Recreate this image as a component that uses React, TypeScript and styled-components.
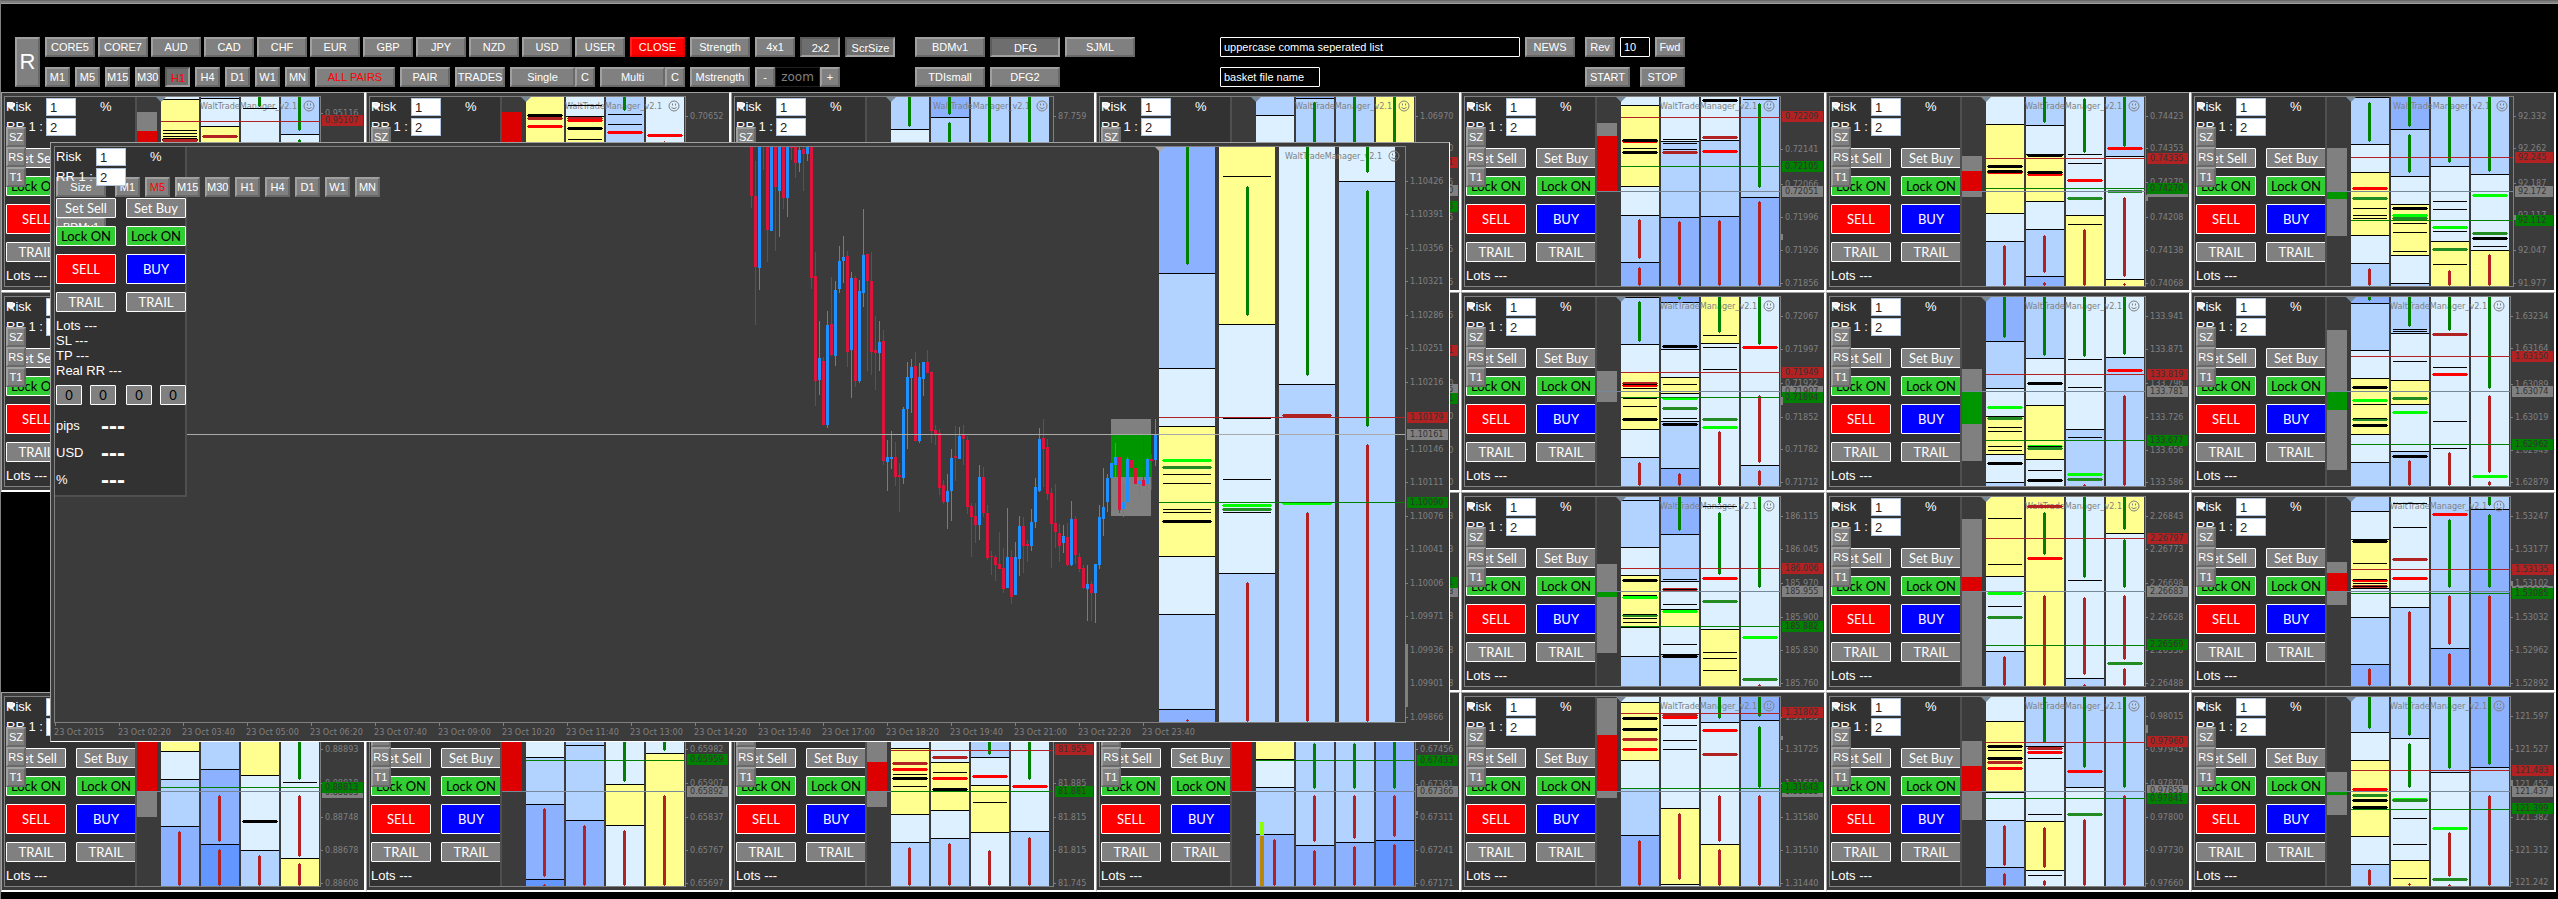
import React from 'react';
import styled, { createGlobalStyle, css } from 'styled-components';

const GlobalStyle = createGlobalStyle`
  html, body { margin: 0; background: #000; }
  body { font-family: 'Liberation Sans', Arial, sans-serif; color: #fff; overflow-x: hidden; }
  *, *::before, *::after { box-sizing: border-box; }
  button, input { font-family: inherit; margin: 0; }
  button { cursor: pointer; }
`;

const AXIS_FONT = "'DejaVu Sans Condensed', 'DejaVu Sans', sans-serif";

/* ---------- colours ---------- */

const BAND: Record<string, string> = {
  L: '#dcf0ff',
  M: '#b2d2ff',
  D: '#8cb2ff',
  E: '#6496ff',
  Y: '#ffff90',
};
const MARK: Record<string, string> = {
  '-': '#000',
  '=': '#000',
  r: '#ff0000',
  d: '#b22222',
  g: '#00ff00',
  f: '#228b22',
};
const TAG: Record<string, string> = { red: '#b22222', green: '#008000', gray: '#808080' };

/* ---------- shell ---------- */

const Desk = styled.main`
  position: relative;
  min-height: 100vh;
  background: #000;
  border-left: 1px solid #808080;
  border-top: 1px solid #696969;
  overflow: hidden;
`;

const TopEdge = styled.div`
  height: 3px;
  background: #808080;
  border-bottom: 1px solid #a0a0a0;
`;

const Toolbar = styled.header`
  display: flex;
  align-items: flex-start;
  padding: 33px 0 5px 14px;
  height: 88px;
`;

const Section = styled.div<{ $before?: number }>`
  display: flex;
  flex-direction: column;
  gap: 10px;
  margin-left: ${(p) => p.$before ?? 5}px;
  flex: none;
`;

const Row = styled.div<{ $gap?: number }>`
  display: flex;
  gap: ${(p) => p.$gap ?? 5}px;
  height: 20px;
`;

const Joined = styled.div`
  display: flex;
`;

const Bevel = styled.button<{ $w: number; $h?: number; $down?: boolean; $color?: string; $bg?: string; $size?: number }>`
  flex: none;
  width: ${(p) => p.$w}px;
  height: ${(p) => p.$h ?? 20}px;
  padding: 0;
  font-size: ${(p) => p.$size ?? 11}px;
  line-height: 16px;
  white-space: nowrap;
  color: ${(p) => p.$color ?? '#fff'};
  background: ${(p) => p.$bg ?? '#808080'};
  border: 2px solid;
  border-color: #a0a0a0 #696969 #696969 #a0a0a0;
  ${(p) =>
    p.$down &&
    css`
      background: #6e6e6e;
      border-color: #5c5c5c #a0a0a0 #a0a0a0 #5c5c5c;
      padding: 1px 0 0 1px;
    `}
  ${(p) =>
    p.$bg &&
    css`
      border-color: #ff2020 #e00000 #e00000 #ff2020;
    `}
`;

const ZoomLabel = styled.span`
  width: 45px;
  text-align: center;
  font: 12px/18px 'DejaVu Sans', sans-serif;
  color: #808080;
  border: 1px solid #202020;
`;

const BarField = styled.input<{ $w: number }>`
  width: ${(p) => p.$w}px;
  height: 20px;
  flex: none;
  padding: 0 3px;
  background: #000;
  color: #fff;
  border: 1px solid #fff;
  border-radius: 1px;
  font-size: 11px;
`;

/* ---------- chart panels ---------- */

const Wall = styled.section`
  display: grid;
  grid-template-columns: repeat(7, 1fr);
  grid-auto-rows: 200px;
  padding-right: 2px;
`;

const Panel = styled.article`
  display: flex;
  min-width: 0;
  overflow: hidden;
  padding: 3px 0 3px 2px;
  background: #3b3b3b;
  border: solid #a0a0a0;
  border-width: 1px 2px 2px 1px;
  border-right-color: #fff;
  border-bottom-color: #fff;
`;

const Plot = styled.div`
  position: relative;
  display: flex;
  flex: 1;
  min-width: 0;
  align-items: flex-start;
  border: 1px solid #808080;
  overflow: hidden;
`;

const Spacer = styled.div`
  flex: 1;
  height: 1px;
`;

const Drawing = styled.svg`
  display: block;
  flex: none;
`;

const Ticket = styled.form<{ $framed?: boolean }>`
  flex: none;
  width: 132px;
  height: ${(p) => (p.$framed ? '350px' : '189px')};
  padding: 1px 0 0 1px;
  background: #323232;
  border-right: 2px solid #4f4f4f;
  border-bottom: ${(p) => (p.$framed ? '2px solid #4f4f4f' : '0')};
  overflow: ${(p) => (p.$framed ? 'visible' : 'hidden')};
`;

const Line = styled.div<{ $after: number }>`
  position: relative;
  z-index: 2;
  display: flex;
  align-items: center;
  height: 18px;
  margin-bottom: ${(p) => p.$after}px;
  font-size: 13px;
  line-height: 18px;
`;

const Caption = styled.label`
  width: 40px;
  flex: none;
  white-space: pre;
`;

const TicketField = styled.input`
  width: 30px;
  height: 18px;
  padding: 0 0 0 3px;
  background: #fff;
  color: #222;
  border: 1px solid #b0c4de;
  font-size: 13px;
`;

const Percent = styled.span`
  margin-left: 24px;
`;

const Pair = styled.div<{ $after: number }>`
  position: relative;
  z-index: 2;
  display: flex;
  gap: 10px;
  width: 130px;
  margin-bottom: ${(p) => p.$after}px;
`;

const Action = styled.button<{ $bg?: string; $ink?: string; $tall?: boolean }>`
  width: 60px;
  height: ${(p) => (p.$tall ? 30 : 20)}px;
  flex: none;
  padding: 0;
  font: 13px/16px Lato, 'Open Sans', sans-serif;
  white-space: nowrap;
  color: ${(p) => p.$ink ?? '#fff'};
  background: ${(p) => p.$bg ?? '#808080'};
  border: 1px solid #fff;
  border-radius: 1px;
`;

const Split = styled.div`
  display: flex;
  justify-content: space-between;
  width: 60px;
`;

const Count = styled(Action)`
  width: 26px;
  color: #000;
`;

const Facts = styled.div`
  font-size: 13px;
  line-height: 15px;
  white-space: pre;
  margin: -2px 0 7px;
`;

const Totals = styled.dl`
  display: grid;
  grid-template-columns: 45px auto;
  grid-auto-rows: 27px;
  margin: 13px 0 0;
  font-size: 13px;
  line-height: 15px;
  dt, dd { margin: 0; }
  dd { font-size: 24px; font-weight: 700; }
`;

const Side = styled.div`
  position: absolute;
  z-index: 3;
  left: 1px;
  top: 30px;
  display: flex;
  flex-direction: column;
`;

const Pin = styled.svg`
  position: absolute;
  z-index: 4;
  left: 2px;
  top: 6px;
`;

/* ---------- floating window ---------- */

const Floating = styled.article`
  position: absolute;
  z-index: 5;
  left: 49px;
  top: 141px;
  width: 1400px;
  height: 600px;
  display: grid;
  grid-template-columns: 1fr 43px;
  grid-template-rows: 577px 1fr;
  padding: 3px 0 0 3px;
  background: #3b3b3b;
  border: 1px solid #a0a0a0;
  border-right-color: #fff;
  border-bottom-color: #fff;
`;

const Behind = styled.div`
  position: absolute;
  z-index: 1;
  left: 1px;
  top: 30px;
  display: flex;
  gap: 5px;
`;

const BehindLow = styled(Behind)`
  top: 70px;
`;

const SizeSlot = styled.div`
  width: 54px;
`;

const Times = styled.div`
  display: flex;
  overflow: hidden;
  grid-column: 1 / -1;
`;

const Time = styled.span`
  width: 64px;
  flex: none;
  white-space: nowrap;
  font: 9px/12px ${AXIS_FONT};
  color: #808080;
  &::before {
    content: '';
    display: block;
    width: 1px;
    height: 3px;
    margin-left: 1px;
    background: #808080;
  }
`;

/* ---------- chart drawing ---------- */

/* Levels are given in ticks; three ticks make one pixel. */
const px = (v: number, top: number) => Math.round((v - top) / 3);

type Level = [string, number, string?];

type ColumnsProps = {
  cols: string[];
  x: number;
  width: number;
  pitch: number;
  top: number;
  bottom: number;
  title: string;
  titleX: number;
};

/* Column notation: "bands | marks | bars", e.g. "L49 Y292 M | -151 r187 | u21:98". */
function Columns({ cols, x, width, pitch, top, bottom, title, titleX }: ColumnsProps) {
  const bands: React.ReactNode[] = [];
  const marks: React.ReactNode[] = [];
  const inset = width > 50 ? 4 : 2;
  cols.forEach((text, i) => {
    const [b = '', m = '', s = ''] = text.split('|').map((t) => t.trim());
    const left = x + i * pitch;
    let from = 0;
    b.split(' ').filter(Boolean).forEach((token, k) => {
      const last = token.length === 1;
      const to = px(last ? bottom : Number(token.slice(1)), top);
      bands.push(
        <rect key={`${i}b${k}`} x={left} y={from} width={width} height={Math.max(0, to - from)} fill={BAND[token[0]]} />,
      );
      if (!last) bands.push(<rect key={`${i}l${k}`} x={left} y={to - 1} width={width} height={1} fill="#000" />);
      from = to;
    });
    m.split(' ').filter(Boolean).forEach((token, k) => {
      const y = px(Number(token.slice(1)), top);
      if (token[0] === '-') {
        marks.push(<rect key={`${i}m${k}`} x={left + inset} y={y - 1} width={width - inset * 2} height={1} fill="#000" />);
      } else {
        const fill = MARK[token[0]];
        marks.push(
          <g key={`${i}m${k}`} fill={fill}>
            <rect x={left + inset} y={y - 2} width={width - inset * 2} height={3} />
            <rect x={left + inset - 1} y={y - 1} width={width - inset * 2 + 2} height={1} />
          </g>,
        );
      }
    });
    s.split(' ').filter(Boolean).forEach((token, k) => {
      const [a, z] = token.slice(1).split(':').map((v) => px(Number(v), top));
      const bx = left + (width > 50 ? 27 : 17);
      const fill = token[0] === 'u' ? '#008000' : '#b22222';
      marks.push(
        <g key={`${i}s${k}`} fill={fill}>
          <rect x={bx + 1} y={a} width={1} height={z - a} />
          <rect x={bx} y={a === 0 ? 0 : a + 1} width={3} height={Math.max(1, z - a - (a === 0 ? 1 : 2))} />
        </g>,
      );
    });
  });
  return (
    <g shapeRendering="crispEdges">
      {bands}
      <text x={titleX} y={12} fontFamily={AXIS_FONT} fontSize={9} fill="#808080">
        {title}
      </text>
      <g transform={`translate(${titleX + 103} 3)`} fill="none" stroke="#808080" shapeRendering="geometricPrecision">
        <circle cx="6" cy="6" r="5" />
        <path d="M3.5 7.5q2.500 2.400 5 0" />
        <path d="M4.500 3.500v2M7.500 3.500v2" />
      </g>
      {marks}
    </g>
  );
}

type AxisProps = {
  levels: Level[];
  top: number;
  height: number;
  width: number;
  thumb?: [number, number];
};

function Axis({ levels, top, height, width, thumb }: AxisProps) {
  const plain = levels.filter((l) => !l[2]);
  const tags = ['gray', 'red', 'green'].flatMap((kind) => levels.filter((l) => l[2] === kind));
  return (
    <Drawing width={width} height={height} viewBox={`0 0 ${width} ${height}`} fontFamily={AXIS_FONT} fontSize={9}>
      {plain.map(([label, at]) => (
        <g key={label + at}>
          <rect x={0} y={px(at, top)} width={2} height={1} fill="#808080" />
          <text x={4} y={px(at, top) + 3} fill="#808080">
            {label}
          </text>
        </g>
      ))}
      {tags.map(([label, at, kind]) => (
        <g key={label + at}>
          <rect x={1} y={px(at, top) - 5} width={width - 2} height={11} fill={TAG[kind as string]} />
          <text x={4} y={px(at, top) + 3} fill="#333">
            {label}
          </text>
        </g>
      ))}
      {thumb && <rect x={0} y={px(thumb[0], top)} width={2} height={px(thumb[1], top) - px(thumb[0], top)} fill="#808080" />}
    </Drawing>
  );
}

const BLOCK: Record<string, string> = { a: '#808080', r: '#dc0000', g: '#009600' };

type Pane = {
  cols: string[];
  block?: string;
  lines?: Level[];
  levels: Level[];
  thumb?: [number, number];
  short?: boolean;
  volume?: boolean;
};

function Block({ spec, x, width, top }: { spec: string; x: number; width: number; top: number }) {
  return (
    <g shapeRendering="crispEdges">
      {spec.split(' ').map((part) => {
        const [a, z] = part.slice(1).split(':').map((v) => px(Number(v), top));
        return <rect key={part} x={x} y={a} width={width} height={z - a} fill={BLOCK[part[0]]} />;
      })}
    </g>
  );
}

function MiniChart({ pane }: { pane: Pane }) {
  const shift = pane.short ? 3 : 0;
  const at = (kind: string) => pane.levels.find((l) => l[2] === kind);
  const red = at('red');
  const green = at('green');
  return (
    <Drawing width={183 + shift} height={189} viewBox={`0 0 ${183 + shift} 189`}>
      {pane.block && <Block spec={pane.block} x={0} width={20} top={21} />}
      <Columns
        cols={pane.cols}
        x={24}
        width={38}
        pitch={40}
        top={21}
        bottom={588}
        title="WaltTradeManager_v2.1"
        titleX={63 + shift}
      />
      {pane.volume && (
        <g shapeRendering="crispEdges">
          <rect x={28} y={125} width={4} height={13} fill="#8cff00" />
          <rect x={28} y={139} width={4} height={50} fill="#b8860b" />
        </g>
      )}
      <g shapeRendering="crispEdges">
        <rect x={0} y={94} width={183 + shift} height={1} fill="#778899" />
        {red && <rect x={24} y={px(red[1] + 2, 21)} width={159 + shift} height={1} fill="#b22222" />}
        {green && <rect x={24} y={px(green[1] + 2, 21)} width={159 + shift} height={1} fill="#008000" />}
      </g>
      <path d="M19 0h10l-5 5z" fill="#778899" />
    </Drawing>
  );
}

/* ---------- order ticket ---------- */

function TicketTop({ id }: { id: string }) {
  return (
    <>
      <Line $after={2}>
        <Caption htmlFor={`${id}-risk`}>Risk</Caption>
        <TicketField id={`${id}-risk`} defaultValue="1" />
        <Percent>%</Percent>
      </Line>
      <Line $after={12}>
        <Caption htmlFor={`${id}-rr`}>RR 1 :</Caption>
        <TicketField id={`${id}-rr`} defaultValue="2" />
      </Line>
      <Pair $after={8}>
        <Action type="button">Set Sell</Action>
        <Action type="button">Set Buy</Action>
      </Pair>
      <Pair $after={8}>
        <Action type="button" $bg="#32cd32" $ink="#000">Lock ON</Action>
        <Action type="button" $bg="#32cd32" $ink="#000">Lock ON</Action>
      </Pair>
      <Pair $after={8}>
        <Action type="button" $tall $bg="#ff0000">SELL</Action>
        <Action type="button" $tall $bg="#0000ff">BUY</Action>
      </Pair>
      <Pair $after={8}>
        <Action type="button">TRAIL</Action>
        <Action type="button">TRAIL</Action>
      </Pair>
    </>
  );
}

function PanePanel({ pane, id }: { pane: Pane; id: string }) {
  return (
    <Panel>
      <Plot>
        <Ticket>
          <TicketTop id={id} />
          <Facts>{'Lots ---\nSL ---'}</Facts>
          <Side>
            <Bevel type="button" $w={20}>SZ</Bevel>
            <Bevel type="button" $w={20}>RS</Bevel>
            <Bevel type="button" $w={20}>T1</Bevel>
          </Side>
          <Pin width="8" height="8" viewBox="0 0 8 8">
            <path d="M0 0h8v3l-4 4-4-4z" fill="#fff" opacity="0.9" />
          </Pin>
        </Ticket>
        <MiniChart pane={pane} />
        <Spacer />
      </Plot>
      <Axis levels={pane.levels} top={18} height={191} width={pane.short ? 40 : 43} thumb={pane.thumb} />
    </Panel>
  );
}

/* ---------- data ---------- */

const P: Record<string, Pane> = {
  r1c1: {
    cols: ['L31 Y | -124 -132 -142 =150 d154', 'M28 L112 Y | d142', 'L | -58 | u21:50', 'M134 L | | u21:122 u148:580'],
    block: 'a66:123 r123:304',
    levels: [['0.95116', 70], ['0.95107', 91, 'red'], ['0.95046', 176]],
  },
  r1c2: {
    cols: ['Y | =77 d88 r112', 'L82 Y | -48 d87 r93 =118 -151', 'M | -76 -106 r130 | u21:64', 'L | r139 | m154:580'],
    block: 'r66:304',
    levels: [['0.70652', 77]],
  },
  r1c3: {
    cols: ['M121 L | | u21:110', 'D84 M | | u21:76 u97:580', 'M | | u21:580', 'M | | u21:580'],
    short: true,
    levels: [['87.759', 77]],
  },
  r1c4: {
    cols: ['M79 L', 'D28 M | | u35:580', 'M | | u21:580', 'Y | | u21:580'],
    levels: [
      ['1.06970', 77], ['1.06900', 175], ['1.06871', 217, 'red'], ['1.06825', 277], ['1.06810', 301, 'gray'],
      ['1.06776', 349, 'green'], ['1.06755', 380], ['1.06685', 478], ['1.06615', 577],
    ],
  },
  r1c5: {
    cols: [
      'L49 Y292 L379 M520 D | r157 =153 -178 =190 | m388:508 m530:588',
      'L157 M385 D | -151 -163 -181 d189 | m394:588',
      'L154 M382 D | =34 d145 r187 | m390:588',
      'M325 D | -31 | u40:295 m334:588',
    ],
    block: 'a99:138 r138:304',
    levels: [
      ['0.72209', 79, 'red'], ['0.72141', 176], ['0.72105', 227, 'green'], ['0.72066', 281], ['0.72051', 302, 'gray'],
      ['0.71996', 380], ['0.71926', 480], ['0.71856', 578],
    ],
    thumb: [432, 450],
  },
  r1c6: {
    cols: [
      'L106 Y373 L457 M | =232 r248 =245 | m466:588',
      'M109 L194 Y337 L421 M562 D | =197 r256 =249 -298 -335 | u21:98 m434:550 m575:588',
      'L379 Y | -196 -223 r274 f328 -406 | u25:188 m416:588',
      'M202 L571 Y | r178 f307 | u21:170 m320:560 m580:588',
    ],
    block: 'a198:243 r243:304 a304:321',
    levels: [
      ['0.74423', 77], ['0.74353', 175], ['0.74335', 203, 'red'], ['0.74279', 275], ['0.74263', 302, 'gray'],
      ['0.74270', 293, 'green'], ['0.74208', 380], ['0.74138', 479], ['0.74068', 578],
    ],
    thumb: [315, 333],
  },
  r1c7: {
    cols: [
      'M25 M166 L250 Y439 L523 M | r298 f328 -358 -379 -388 -394 | u37:155 m535:588',
      'D121 M262 L346 Y499 L583 M | =358 g379 f386 -403 -430 -487 | u21:110 u133:250',
      'M232 L457 Y | -337 -361 g415 -427 f481 -526 | u21:220 m540:588',
      'M256 L484 Y | g319 f433 =448 -472 | u21:247 m493:588',
    ],
    block: 'a174:306 g306:327 a327:438',
    short: true,
    levels: [
      ['92.332', 77], ['92.262', 175], ['92.245', 200, 'red'], ['92.187', 279], ['92.172', 302, 'gray'],
      ['92.117', 376], ['92.112', 389, 'green'], ['92.047', 479], ['91.977', 578],
    ],
    thumb: [375, 390],
  },
  r2c1: { cols: [], levels: [] },
  r2c4: {
    cols: [],
    levels: [
      ['0.95235', 76], ['0.95161', 181, 'red'], ['0.95090', 279], ['0.95075', 297, 'gray'], ['0.95061', 323, 'green'],
      ['0.95020', 379], ['0.94950', 479], ['0.94880', 577],
    ],
  },
  r2c5: {
    cols: [
      'M25 M166 L250 Y421 L505 M | d281 r287 -286 -298 -328 -352 =391 | u33:155 m517:588',
      'D40 M181 L265 Y313 L397 M538 D | =172 -286 g328 f358 -388 =404 | u21:29 m550:588',
      'Y163 L | -139 -175 -241 f391 g415 | u21:128 m424:588',
      'L529 M | r175 | u21:164 m316:520 m541:588',
    ],
    block: 'a243:336',
    levels: [
      ['0.72067', 77], ['0.71997', 176], ['0.71949', 245, 'red'], ['0.71922', 280], ['0.71907', 302, 'gray'],
      ['0.71894', 320, 'green'], ['0.71852', 380], ['0.71782', 478], ['0.71712', 577],
    ],
    thumb: [320, 344],
  },
  r2c6: {
    cols: [
      'D157 M298 L382 Y496 L580 M | g355 f386 -415 -427 -472 -484 =523 | u21:145',
      'M208 L349 Y511 L | =283 g470 f478 -470 -544 =572 | u21:197',
      'L421 M | -211 -295 -445 g556 f571 | u21:200 m583:588',
      'L205 M | r244 | u21:194 m316:588',
    ],
    block: 'a237:306 g306:402 a402:513',
    levels: [
      ['133.941', 77], ['133.871', 176], ['133.819', 251, 'red'], ['133.796', 280], ['133.781', 302, 'gray'],
      ['133.726', 380], ['133.677', 449, 'green'], ['133.656', 479], ['133.586', 577],
    ],
  },
  r2c7: {
    cols: [
      'D43 M184 L268 Y436 L520 M | =295 g334 -346 f389 -386 =408 | u21:32',
      'M133 L274 Y346 L487 M | -121 -127 -217 f328 g370 =502 | u21:110 m511:588',
      'L | d136 -235 r256 -397 -478 | u21:124 m487:588',
      'L | g562 | u21:296 m316:550 m573:588',
    ],
    block: 'a120:306 g306:360 a360:540',
    levels: [
      ['1.63234', 77], ['1.63164', 175], ['1.63150', 197, 'red'], ['1.63089', 281], ['1.63074', 302, 'gray'],
      ['1.63019', 380], ['1.62962', 461, 'green'], ['1.62949', 479], ['1.62879', 577],
    ],
  },
  r3c4: {
    cols: [],
    levels: [
      ['0.64303', 77], ['0.64233', 176], ['0.64171', 277, 'green'], ['0.64143', 304, 'gray'], ['0.64088', 379],
      ['0.64018', 479], ['0.63948', 578],
    ],
  },
  r3c5: {
    cols: [
      'M34 M175 L259 Y415 L502 M | =274 -319 g325 f377 -374 -388 -400',
      'D136 M277 L361 Y412 L496 M | -271 d301 -299 -346 g366 -466 =502 | u21:124',
      'L421 Y | -52 r268 f337 -490 -508 -544 | u21:43 u65:256',
      'L | g445 f571 | u21:295 m582:588',
    ],
    block: 'a222:306 g306:321 a321:489',
    levels: [
      ['186.115', 77], ['186.045', 176], ['186.006', 233, 'red'], ['185.970', 279], ['185.955', 302, 'gray'],
      ['185.900', 380], ['185.882', 407, 'green'], ['185.830', 479], ['185.760', 578],
    ],
  },
  r3c6: {
    cols: [
      'Y262 L487 M | -88 -226 g313 -352 f384 | m499:588',
      'Y | d52 r208 | u65:196 m316:588',
      'L568 M | -274 -307 | u21:265 m320:556 m582:588',
      'Y133 L | f523 | u21:121 u147:295 m316:510 m534:588',
    ],
    block: 'a87:261 r261:304 a304:588',
    levels: [
      ['2.26843', 77], ['2.26797', 143, 'red'], ['2.26773', 176], ['2.26698', 280], ['2.26683', 302, 'gray'],
      ['2.26628', 380], ['2.26569', 463, 'green'], ['2.26558', 480], ['2.26488', 578],
    ],
  },
  r3c7: {
    cols: [
      'M67 L151 Y298 L385 M526 D | =156 -223 r274 -271 -283 d292 -292 | m535:588',
      'L355 M | -43 -115 d211 r268 | m364:588',
      'M478 D | r76 | u88:295 m316:466 m490:588',
      'M61 D | | u21:49 u73:295 m316:588',
    ],
    block: 'a216:249 r249:304 a304:345',
    levels: [
      ['1.53247', 77], ['1.53177', 176], ['1.53135', 236, 'red'], ['1.53102', 279], ['1.53095', 302, 'gray'],
      ['1.53085', 308, 'green'], ['1.53032', 380], ['1.52962', 480], ['1.52892', 578],
    ],
    thumb: [272, 288],
  },
  r4c1: {
    cols: [
      'Y187 L271 M412 D | | m424:588',
      'M241 D466 E | -157 | m315:456 m478:588',
      'Y259 L484 M | =397 | m495:588',
      'L508 Y | -280 | u21:270 m315:500 m518:588',
    ],
    block: 'r21:304 a304:380',
    levels: [
      ['0.88893', 176], ['0.88818', 278], ['0.88803', 305, 'gray'], ['0.88813', 290, 'green'], ['0.88748', 380],
      ['0.88678', 479], ['0.88608', 578],
    ],
  },
  r4c2: {
    cols: [
      'L205 M346 D571 E | | m354:560 m582:588',
      'M169 M394 D | | m405:588',
      'L286 Y409 L | | u21:275 m420:588',
      'L193 Y | | u21:182 m315:588',
    ],
    block: 'r21:304',
    levels: [
      ['0.65982', 176], ['0.65959', 208, 'green'], ['0.65907', 280], ['0.65892', 302, 'gray'], ['0.65837', 380],
      ['0.65767', 479], ['0.65697', 578],
    ],
  },
  r4c3: {
    cols: [
      'L178 Y376 L460 M | d222 r240 -256 =268 -292 | m470:588',
      'L220 Y364 L448 M | d205 r268 -250 =300 | m460:588',
      'M205 L289 Y430 L | -340 r262 | u21:195 m480:588',
      'L427 M | r292 | u21:270 m440:588',
    ],
    block: 'a21:215 r215:304 a304:350',
    levels: [
      ['81.955', 178, 'red'], ['81.885', 280], ['81.881', 302, 'green'], ['81.815', 380], ['81.815', 479],
      ['81.745', 578],
    ],
    short: true,
  },
  r4c4: {
    cols: [
      'Y211 L295 M436 D | | m448:588',
      'M469 D | | u159:296 m316:457 m481:588',
      'M460 D | | u159:296 m316:448 m468:588',
      'D454 E | | u21:296 m316:442 m462:588',
    ],
    block: 'r21:304',
    volume: true,
    levels: [
      ['0.67456', 176], ['0.67433', 209, 'green'], ['0.67381', 281], ['0.67366', 302, 'gray'], ['0.67311', 380],
      ['0.67241', 480], ['0.67171', 578],
    ],
    thumb: [363, 375],
  },
  r4c5: {
    cols: [
      'L40 Y214 L298 M439 D | -73 =87 =120 d151 r181 | m451:588',
      'L358 Y584 L | d79 r85 -109 -154 -181 | m370:570',
      'M100 L466 Y | r124 d196 | u21:88 m316:456 m477:588',
      'D94 M | | u21:82 u107:295 m316:588',
    ],
    block: 'a24:135 r135:304 a304:324',
    levels: [
      ['1.31802', 67, 'red'], ['1.31795', 80], ['1.31725', 176], ['1.31650', 280], ['1.31635', 302, 'gray'],
      ['1.31643', 292, 'green'], ['1.31580', 380], ['1.31510', 479], ['1.31440', 578],
    ],
    thumb: [138, 150],
  },
  r4c6: {
    cols: [
      'L97 Y310 L394 M535 D | =171 -184 =206 d218 r238 | m406:527 m548:588',
      'M172 L397 Y544 L | d178 r190 -208 -307 -376 -559 | u21:160 m410:535 m571:588',
      'M295 L | r247 f376 | u21:235 m388:588',
      'M | | u21:295 m316:588',
    ],
    block: 'a153:228 r228:304 a304:390',
    levels: [
      ['0.98015', 78], ['0.97960', 154, 'red'], ['0.97945', 178], ['0.97870', 280], ['0.97855', 300, 'gray'],
      ['0.97841', 323, 'green'], ['0.97800', 380], ['0.97730', 479], ['0.97660', 578],
    ],
    thumb: [106, 130],
  },
  r4c7: {
    cols: [
      'M130 L214 Y442 L526 M | r301 f319 =333 =354 | u21:118 m537:588',
      'M148 L514 Y | g331 f334 -388 -466 -568 | u21:137 u160:295 m580:588',
      'M250 L | g418 f571 | u21:238 m427:560 m583:588',
      'D235 M | | u21:224 m316:588',
    ],
    block: 'a246:306 g306:315 a315:375',
    levels: [
      ['121.597', 77], ['121.527', 176], ['121.483', 239, 'red'], ['121.452', 281], ['121.437', 302, 'gray'],
      ['121.399', 355, 'green'], ['121.382', 380], ['121.312', 479], ['121.242', 577],
    ],
    thumb: [270, 288],
  },
};

const ORDER = [
  'r1c1', 'r1c2', 'r1c3', 'r1c4', 'r1c5', 'r1c6', 'r1c7',
  'r2c1', '', '', 'r2c4', 'r2c5', 'r2c6', 'r2c7',
  '', '', '', 'r3c4', 'r3c5', 'r3c6', 'r3c7',
  'r4c1', 'r4c2', 'r4c3', 'r4c4', 'r4c5', 'r4c6', 'r4c7',
];

/* Five-minute bars: direction, wick top, body top, body bottom, wick bottom. */
const BARS = `R 50 50 198 234,R 93 198 411 585,B 50 50 414 480,R 50 50 50 120,R 50 50 300 396,B 50 50 303 303,
R 50 50 171 363,B 50 50 183 321,R 50 50 204 237,B 50 50 204 261,R 50 50 54 90,R 50 50 99 144,B 50 60 99 126,
R 50 57 72 183,B 50 50 72 93,R 50 50 444 477,R 366 438 753 828,B 573 684 750 795,R 681 693 885 885,
B 543 585 885 894,R 441 582 675 678,B 453 480 678 708,B 348 393 477 489,B 318 381 393 459,R 363 378 666 711,
B 426 444 660 804,R 438 444 753 771,B 450 483 753 759,B 237 375 489 531,R 372 372 453 723,R 366 453 666 735,
R 558 660 669 780,B 573 636 669 723,R 600 633 993 1005,B 930 981 996 1083,B 903 981 987 1017,R 936 981 1041 1068,
R 999 1035 1041 1146,B 831 837 1044 1062,B 696 741 837 957,B 687 711 744 849,R 666 708 933 933,B 699 741 933 939,
B 696 696 747 798,R 660 696 729 729,R 723 726 903 939,R 885 900 912 945,R 897 909 1074 1095,R 1050 1065 1116 1122,
B 1032 1083 1116 1197,B 957 984 1083 1173,R 888 978 984 1053,B 891 918 987 987,R 885 912 927 1005,
R 918 930 1131 1152,R 1119 1128 1161 1281,R 1119 1158 1185 1239,B 1005 1041 1185 1230,R 1011 1041 1149 1161,
R 1125 1149 1284 1290,R 1263 1278 1281 1335,R 1275 1281 1305 1353,R 1206 1302 1317 1317,R 1254 1314 1377 1389,
B 1134 1281 1374 1374,R 1260 1281 1401 1422,B 1236 1281 1395 1395,B 1158 1188 1287 1338,R 1161 1188 1248 1329,
R 1230 1242 1248 1296,B 1137 1176 1248 1263,B 1044 1071 1176 1194,B 894 927 1083 1086,R 867 924 957 1071,
R 927 951 1092 1110,R 1074 1089 1182 1314,R 1062 1179 1206 1254,R 1182 1209 1248 1296,B 1185 1218 1239 1269,
R 1179 1221 1305 1308,B 1113 1167 1305 1308,R 1158 1167 1275 1302,R 1269 1281 1317 1326,R 1305 1314 1374 1377,
B 1305 1362 1377 1473,R 1353 1362 1389 1473,B 1302 1302 1389 1479,B 1125 1161 1305 1317,B 1014 1131 1167 1218,
B 1032 1044 1116 1146,B 999 999 1044 1143,B 939 981 1005 1050,R 978 981 1140 1149,B 1065 1116 1137 1161,
B 981 987 1116 1119,R 984 990 1014 1032,R 1011 1014 1062 1062,B 1050 1053 1062 1095,R 915 1050 1068 1068,
B 984 987 1062 1080,R 972 987 993 1080,B 867 912 990 1008`
  .split(',')
  .map((t) => t.trim().split(' '))
  .map(([dir, ...v]) => ({ dir, v: v.map((n) => px(Number(n), 50)) }));

const MAIN_LEVELS: Level[] = [
  ['1.10426', 153], ['1.10391', 252], ['1.10356', 353], ['1.10321', 453], ['1.10286', 554], ['1.10251', 654],
  ['1.10216', 755], ['1.10179', 859, 'red'], ['1.10161', 911, 'gray'], ['1.10146', 957], ['1.10111', 1056],
  ['1.10090', 1115, 'green'], ['1.10076', 1158], ['1.10041', 1257], ['1.10006', 1359], ['1.09971', 1458],
  ['1.09936', 1558], ['1.09901', 1658], ['1.09866', 1760],
];

const TIMES = [
  '2015', '02:20', '03:40', '05:00', '06:20', '07:40', '09:00', '10:20', '11:40',
  '13:00', '14:20', '15:40', '17:00', '18:20', '19:40', '21:00', '22:20', '23:40',
];

function MainChart() {
  return (
    <Drawing width={1218} height={575} viewBox="0 0 1218 575">
      <Block spec="a867:915 g915:1041 a1041:1158" x={924} width={40} top={50} />
      <g shapeRendering="crispEdges">
        {BARS.map(({ dir, v }, i) => {
          const x = 563 + i * 4;
          return (
            <g key={i} fill={dir === 'R' ? '#dc143c' : '#1e90ff'}>
              <rect x={x + 1} y={v[0]} width={1} height={v[3] - v[0]} />
              <rect x={x} y={v[1]} width={3} height={v[2] - v[1]} />
            </g>
          );
        })}
      </g>
      <Columns
        cols={[
          'D430 M715 L889 Y1279 L1453 M1738 D | g991 f1012 -1033 -1060 -1138 -1147 =1174 | u50:403 m1766:1775',
          'Y583 L1330 M | -139 -865 -1048 g1126 f1138 -1147 | u166:556 m1355:1775',
          'L763 M | d857 g1121 | u50:736 m1144:1775',
          'L154 M | | u50:127 u179:889 m940:1775',
        ]}
        x={972}
        width={56}
        pitch={60}
        top={50}
        bottom={1775}
        title="WaltTradeManager_v2.1"
        titleX={1098}
      />
      <g shapeRendering="crispEdges">
        <rect x={972} y={270} width={246} height={1} fill="#b22222" />
        <rect x={972} y={355} width={246} height={1} fill="#008000" />
        <rect x={0} y={287} width={1218} height={1} fill="#a9a9a9" />
      </g>
      <path d="M968 0h10l-5 5z" fill="#a9a9a9" />
    </Drawing>
  );
}

function MainWindow() {
  return (
    <Floating>
      <Plot>
        <Behind>
          <SizeSlot>
            <Bevel type="button" $w={50}>Size</Bevel>
          </SizeSlot>
          {['M1', 'M5', 'M15', 'M30', 'H1', 'H4', 'D1', 'W1', 'MN'].map((t) => (
            <Bevel key={t} type="button" $w={25} $color={t === 'M5' ? '#ff0000' : '#fff'}>
              {t}
            </Bevel>
          ))}
        </Behind>
        <BehindLow>
          <Bevel type="button" $w={50}>BDMv1</Bevel>
        </BehindLow>
        <Ticket $framed>
          <TicketTop id="main" />
          <Facts>{'Lots ---\nSL ---\nTP ---\nReal RR ---'}</Facts>
          <Pair $after={0}>
            <Split>
              <Count type="button">0</Count>
              <Count type="button">0</Count>
            </Split>
            <Split>
              <Count type="button">0</Count>
              <Count type="button">0</Count>
            </Split>
          </Pair>
          <Totals>
            <dt>pips</dt>
            <dd>---</dd>
            <dt>USD</dt>
            <dd>---</dd>
            <dt>%</dt>
            <dd>---</dd>
          </Totals>
        </Ticket>
        <MainChart />
      </Plot>
      <Axis levels={MAIN_LEVELS} top={47} height={577} width={43} thumb={[1542, 1730]} />
      <Times>
        {TIMES.map((t) => (
          <Time key={t}>23 Oct {t}</Time>
        ))}
      </Times>
    </Floating>
  );
}

function TopBar() {
  return (
    <Toolbar>
      <Bevel type="button" $w={25} $h={50} $size={22}>R</Bevel>
      <Section>
        <Row>
          <Row $gap={3}>
            {['CORE5', 'CORE7', 'AUD', 'CAD', 'CHF', 'EUR', 'GBP', 'JPY', 'NZD', 'USD', 'USER'].map((t) => (
              <Bevel key={t} type="button" $w={50}>{t}</Bevel>
            ))}
          </Row>
          <Bevel type="button" $w={55} $bg="#ff0000">CLOSE</Bevel>
        </Row>
        <Row>
          {['M1', 'M5', 'M15', 'M30', 'H1', 'H4', 'D1', 'W1', 'MN'].map((t) => (
            <Bevel key={t} type="button" $w={25} $down={t === 'H1'} $color={t === 'H1' ? '#ff0000' : '#fff'}>{t}</Bevel>
          ))}
          <Bevel type="button" $w={80} $color="#ff0000">ALL PAIRS</Bevel>
          <Bevel type="button" $w={50}>PAIR</Bevel>
          <Bevel type="button" $w={50}>TRADES</Bevel>
          <Joined>
            <Bevel type="button" $w={65}>Single</Bevel>
            <Bevel type="button" $w={20}>C</Bevel>
          </Joined>
          <Joined>
            <Bevel type="button" $w={65}>Multi</Bevel>
            <Bevel type="button" $w={20}>C</Bevel>
          </Joined>
        </Row>
      </Section>
      <Section>
        <Bevel type="button" $w={60}>Strength</Bevel>
        <Bevel type="button" $w={60}>Mstrength</Bevel>
      </Section>
      <Section>
        <Row>
          <Bevel type="button" $w={40}>4x1</Bevel>
          <Bevel type="button" $w={40} $down>2x2</Bevel>
          <Bevel type="button" $w={50} $down>ScrSize</Bevel>
        </Row>
        <Joined>
          <Bevel type="button" $w={20}>-</Bevel>
          <ZoomLabel>zoom</ZoomLabel>
          <Bevel type="button" $w={20}>+</Bevel>
        </Joined>
      </Section>
      <Section $before={20}>
        <Row>
          <Bevel type="button" $w={70}>BDMv1</Bevel>
          <Bevel type="button" $w={70} $down>DFG</Bevel>
          <Bevel type="button" $w={70}>SJML</Bevel>
        </Row>
        <Row>
          <Bevel type="button" $w={70}>TDIsmall</Bevel>
          <Bevel type="button" $w={70}>DFG2</Bevel>
        </Row>
      </Section>
      <Section $before={85}>
        <Row>
          <BarField $w={300} aria-label="Currency list" defaultValue="uppercase comma seperated list" />
          <Bevel type="button" $w={50}>NEWS</Bevel>
        </Row>
        <Row>
          <BarField $w={100} aria-label="Basket file" defaultValue="basket file name" />
        </Row>
      </Section>
      <Section $before={10}>
        <Row>
          <Bevel type="button" $w={30}>Rev</Bevel>
          <BarField $w={30} aria-label="Step" defaultValue="10" />
          <Bevel type="button" $w={30}>Fwd</Bevel>
        </Row>
        <Row $gap={10}>
          <Bevel type="button" $w={45}>START</Bevel>
          <Bevel type="button" $w={45}>STOP</Bevel>
        </Row>
      </Section>
    </Toolbar>
  );
}

export default function App() {
  return (
    <>
      <GlobalStyle />
      <Desk>
        <TopEdge />
        <TopBar />
        <Wall>
          {ORDER.map((key, i) => (key ? <PanePanel key={key} id={key} pane={P[key]} /> : <div key={i} />))}
        </Wall>
        <MainWindow />
      </Desk>
    </>
  );
}
